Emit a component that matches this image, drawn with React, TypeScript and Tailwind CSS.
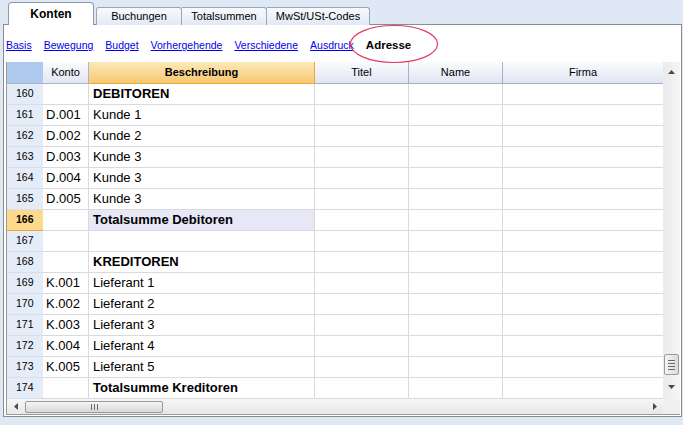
import React from "react";

type Row = { n: number; k: string; b: string; bold?: boolean; hl?: boolean };

const rows: Row[] = [
  { n: 160, k: "", b: "DEBITOREN", bold: true },
  { n: 161, k: "D.001", b: "Kunde 1" },
  { n: 162, k: "D.002", b: "Kunde 2" },
  { n: 163, k: "D.003", b: "Kunde 3" },
  { n: 164, k: "D.004", b: "Kunde 3" },
  { n: 165, k: "D.005", b: "Kunde 3" },
  { n: 166, k: "", b: "Totalsumme Debitoren", bold: true, hl: true },
  { n: 167, k: "", b: "" },
  { n: 168, k: "", b: "KREDITOREN", bold: true },
  { n: 169, k: "K.001", b: "Lieferant 1" },
  { n: 170, k: "K.002", b: "Lieferant 2" },
  { n: 171, k: "K.003", b: "Lieferant 3" },
  { n: 172, k: "K.004", b: "Lieferant 4" },
  { n: 173, k: "K.005", b: "Lieferant 5" },
  { n: 174, k: "", b: "Totalsumme Kreditoren", bold: true },
];

export default function App() {
  return (
    <div className="relative w-[683px] h-[425px] overflow-hidden bg-[#dfe9f6] font-['Liberation_Sans',Arial,sans-serif] text-black">
      {/* Tabs */}
      <div className="relative z-10 flex items-end h-[25px] pl-[8px] pt-[2px] -mb-[1px]">
        <div className="w-[86px] h-[23px] bg-white border border-b-0 border-[#8e99a8] rounded-t-[4px] flex items-center justify-center text-[12px] font-bold text-black">
          Konten
        </div>
        <div className="ml-[2px] w-[86px] h-[18px] bg-gradient-to-b from-[#f8fafd] to-[#e2e9f4] border border-b-0 border-[#98a6ba] rounded-t-[3px] flex items-center justify-center text-[11px] text-black">
          Buchungen
        </div>
        <div className="w-[85px] h-[18px] bg-gradient-to-b from-[#f8fafd] to-[#e2e9f4] border border-l-0 border-b-0 border-[#98a6ba] rounded-tr-[3px] flex items-center justify-center text-[11px] text-black">
          Totalsummen
        </div>
        <div className="w-[103px] h-[18px] bg-gradient-to-b from-[#f8fafd] to-[#e2e9f4] border border-l-0 border-b-0 border-[#98a6ba] rounded-tr-[3px] flex items-center justify-center text-[11px] text-black">
          MwSt/USt-Codes
        </div>
      </div>

      {/* Panel */}
      <div className="ml-[3px] w-[679px] h-[393px] bg-white border border-[#8c8c8c]">
        {/* Links */}
        <div className="h-[37px] flex items-center pl-[2px] pt-[5px] text-[10.5px]">
          <span className="text-[#0000ee] underline">Basis</span>
          <span className="ml-[12px] text-[#0000ee] underline">Bewegung</span>
          <span className="ml-[12px] text-[#0000ee] underline">Budget</span>
          <span className="ml-[12px] text-[#0000ee] underline">Vorhergehende</span>
          <span className="ml-[12px] text-[#0000ee] underline">Verschiedene</span>
          <span className="ml-[12px] text-[#0000ee] underline">Ausdruck</span>
          <span className="ml-[12px] text-[11.5px] font-bold text-black">Adresse</span>
        </div>

        {/* Grid */}
        <div className="ml-[2px] w-[674px] border-l border-b border-[#9a9a9a]">
          <div className="flex">
            <div className="w-[656px]">
              {/* Header */}
              <div className="flex h-[22px] text-[11px]">
                <div className="w-[36px] bg-[#b0c9ee] border-b border-[#9fb5d6]" />
                <div className="w-[46px] bg-gradient-to-b from-[#fbfcfe] to-[#e1e6f1] border-b border-r border-[#a8b4c8] flex items-center justify-center">
                  Konto
                </div>
                <div className="w-[226px] bg-gradient-to-b from-[#fce9b8] to-[#f7c870] border-b border-r border-[#eaa640] flex items-center justify-center font-bold">
                  Beschreibung
                </div>
                <div className="w-[94px] bg-gradient-to-b from-[#fbfcfe] to-[#dfe5f1] border-b border-r border-[#a4b2c8] flex items-center justify-center">
                  Titel
                </div>
                <div className="w-[94px] bg-gradient-to-b from-[#fbfcfe] to-[#dfe5f1] border-b border-r border-[#a4b2c8] flex items-center justify-center">
                  Name
                </div>
                <div className="w-[160px] bg-gradient-to-b from-[#fbfcfe] to-[#dfe5f1] border-b border-[#a4b2c8] flex items-center justify-center">
                  Firma
                </div>
              </div>
              {/* Rows */}
              {rows.map((r) => (
                <div key={r.n} className="flex h-[21px]">
                  <div
                    className={
                      r.hl
                        ? "w-[36px] bg-[#fdd98c] border-b border-[#f0a43c] flex items-center pl-[9px] text-[10.5px] font-bold"
                        : "w-[36px] bg-[#e4ecf7] border-b border-[#d7dfea] flex items-center pl-[9px] text-[10.5px]"
                    }
                  >
                    {r.n}
                  </div>
                  <div className="w-[46px] border-b border-r border-[#dadada] flex items-center pl-[3px] text-[13px]">
                    {r.k}
                  </div>
                  <div
                    className={
                      (r.hl ? "bg-[#e7e7f6] " : "") +
                      "w-[226px] border-b border-r border-[#dadada] flex items-center pl-[4px] text-[13px]" +
                      (r.bold ? " font-bold" : "")
                    }
                  >
                    {r.b}
                  </div>
                  <div className="w-[94px] border-b border-r border-[#dadada]" />
                  <div className="w-[94px] border-b border-r border-[#dadada]" />
                  <div className="w-[160px] border-b border-[#dadada]" />
                </div>
              ))}
            </div>
            {/* Vertical scrollbar */}
            <div className="w-[17px] bg-gradient-to-r from-[#eaeaea] to-[#f6f6f6] flex flex-col items-center">
              <div className="h-[20px] w-full flex items-center justify-center">
                <svg width="7" height="4" viewBox="0 0 7 4">
                  <path d="M0 4 L3.5 0 L7 4 Z" fill="#4a4a4a" />
                </svg>
              </div>
              <div className="flex-1" />
              <div className="w-[15px] h-[21px] rounded-[2px] border border-[#9a9a9a] bg-gradient-to-r from-[#f4f4f4] to-[#dcdcdc] flex flex-col items-center justify-center gap-[2px]">
                <div className="w-[7px] h-[1px] bg-[#6a6a6a]" />
                <div className="w-[7px] h-[1px] bg-[#6a6a6a]" />
                <div className="w-[7px] h-[1px] bg-[#6a6a6a]" />
                <div className="w-[7px] h-[1px] bg-[#6a6a6a]" />
              </div>
              <div className="h-[24px] w-full flex items-center justify-center">
                <svg width="7" height="4" viewBox="0 0 7 4">
                  <path d="M0 0 L3.5 4 L7 0 Z" fill="#4a4a4a" />
                </svg>
              </div>
            </div>
          </div>
          {/* Horizontal scrollbar */}
          <div className="flex h-[15px]">
            <div className="w-[656px] bg-gradient-to-b from-[#f6f6f6] to-[#e8e8e8] flex items-center">
              <div className="w-[17px] flex items-center justify-center">
                <svg width="4" height="7" viewBox="0 0 4 7">
                  <path d="M4 0 L0 3.5 L4 7 Z" fill="#4a4a4a" />
                </svg>
              </div>
              <div className="w-[138px] h-[12px] ml-[1px] rounded-[2px] border border-[#9a9a9a] bg-gradient-to-b from-[#f6f6f6] to-[#d8d8d8] flex items-center justify-center gap-[2px]">
                <div className="w-[1px] h-[6px] bg-[#6a6a6a]" />
                <div className="w-[1px] h-[6px] bg-[#6a6a6a]" />
                <div className="w-[1px] h-[6px] bg-[#6a6a6a]" />
              </div>
              <div className="flex-1" />
              <div className="w-[17px] flex items-center justify-center">
                <svg width="4" height="7" viewBox="0 0 4 7">
                  <path d="M0 0 L4 3.5 L0 7 Z" fill="#4a4a4a" />
                </svg>
              </div>
            </div>
            <div className="w-[17px] bg-[#f0f0f0]" />
          </div>
        </div>
      </div>

      {/* Red ellipse highlight */}
      <svg className="absolute left-[349px] top-[24px]" width="90" height="40" viewBox="0 0 90 40">
        <ellipse cx="45" cy="20" rx="43.5" ry="18.5" fill="none" stroke="#e23a5c" strokeWidth="1.2" />
      </svg>
    </div>
  );
}
